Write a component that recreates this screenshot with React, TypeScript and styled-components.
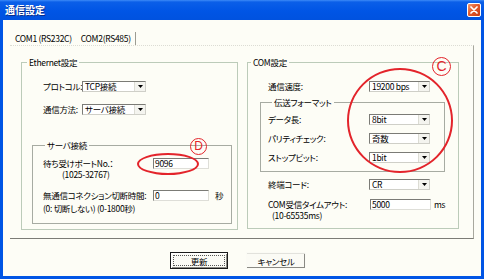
import React from 'react';
import styled, { createGlobalStyle } from 'styled-components';

const FONT = `"Noto Sans CJK JP", "Noto Sans", sans-serif`;

const GlobalStyle = createGlobalStyle`
  html, body {
    margin: 0;
    padding: 0;
    background: #ffffff;
  }
`;

const Window = styled.div`
  position: relative;
  width: 484px;
  height: 279px;
  box-sizing: border-box;
  display: flex;
  flex-direction: column;
  padding: 0 3px 3px 3px;
  background: #0055e5;
  font-family: ${FONT};
  font-size: 8.5px;
  letter-spacing: -0.3px;
  font-feature-settings: "palt" 1;
  color: #000;
  overflow: hidden;
`;

const TitleBar = styled.div`
  height: 20px;
  margin: 0 -3px;
  padding: 0 3px 0 5px;
  display: flex;
  align-items: center;
  justify-content: space-between;
  background: linear-gradient(to bottom, #3d8af7 0px, #0b5fe8 2px, #0055e5 55%, #0052df 100%);
`;

const Title = styled.span`
  color: #fff;
  font-weight: bold;
  font-size: 10px;
  letter-spacing: 0;
  line-height: 12px;
  text-shadow: 1px 1px 0 #0a2d8a;
`;

const CloseButton = styled.div`
  width: 14px;
  height: 14px;
  box-sizing: border-box;
  border: 1px solid #fff;
  border-radius: 2px;
  background: linear-gradient(135deg, #f39a70 0%, #e2592c 45%, #c83c12 100%);
  display: flex;
  align-items: center;
  justify-content: center;
`;

const Client = styled.div`
  flex: 1;
  display: flex;
  flex-direction: column;
  padding: 0 7px;
  background: #fdfdf6;
`;

const TabStrip = styled.div`
  height: 25px;
  display: flex;
  align-items: flex-end;
  padding-left: 1px;
`;

const Tab = styled.div<{ $active?: boolean }>`
  height: 13px;
  line-height: 13px;
  padding: 0 4px;
  white-space: nowrap;
  border-right: ${({ $active }) => ($active ? '1px solid #9c9c92' : '1px solid transparent')};
`;

const Pane = styled.div`
  height: 194px;
  box-sizing: border-box;
  border-top: 1px dotted #dcdcd4;
  border-right: 1px solid #a8a89e;
  border-bottom: 1px solid #7c7c76;
  padding: 10px 14px 8px 11px;
  display: grid;
  grid-template-columns: 217px 212px;
  column-gap: 9px;
  align-items: start;
`;

const GroupBox = styled.fieldset<{ $inner?: boolean; $h?: number }>`
  margin: 0;
  padding: 0;
  min-width: 0;
  box-sizing: border-box;
  height: ${({ $h }) => ($h ? `${$h}px` : 'auto')};
  border: 1px solid ${({ $inner }) => ($inner ? '#a7aba2' : '#bccbb9')};
`;

const Legend = styled.legend<{ $offset?: number }>`
  font-size: 8.5px;
  line-height: 12px;
  padding: 0 2px;
  margin-left: ${({ $offset }) => $offset ?? 3}px;
`;

const ServerBox = styled(GroupBox)`
  margin: 24px 5px 0 10px;
  padding: 6px 0 9px 10px;
`;

const FormatBox = styled(GroupBox)`
  width: 185px;
  margin: 4px 0 0 12px;
  padding: 5px 0 8px 7px;
  display: flex;
  flex-direction: column;
  gap: 7px;
`;

const Stack = styled.div<{ $gap: number; $top: number; $left: number }>`
  display: flex;
  flex-direction: column;
  gap: ${({ $gap }) => $gap}px;
  padding: ${({ $top }) => $top}px 0 0 ${({ $left }) => $left}px;
`;

const Row = styled.div`
  display: flex;
  align-items: center;
  height: 12px;
  white-space: nowrap;
`;

const Label = styled.span<{ $w: number }>`
  width: ${({ $w }) => $w}px;
  flex-shrink: 0;
  line-height: 11px;
`;

const SelectBox = styled.div<{ $w: number }>`
  width: ${({ $w }) => $w}px;
  height: 11px;
  box-sizing: border-box;
  display: flex;
  align-items: stretch;
  background: #fff;
  border: 1px solid;
  border-color: #7b7b76 #cfcfc8 #cfcfc8 #7b7b76;
`;

const SelectValue = styled.span`
  flex: 1;
  padding-left: 2px;
  line-height: 9px;
  white-space: nowrap;
`;

const SelectArrow = styled.span`
  width: 10px;
  display: flex;
  align-items: center;
  justify-content: center;
  background: #f4f4ef;
  border-left: 1px solid #dcdcd4;
`;

const TextField = styled.div<{ $w: number }>`
  width: ${({ $w }) => $w}px;
  height: 11px;
  box-sizing: border-box;
  padding-left: 1px;
  line-height: 9px;
  background: #fff;
  border: 1px solid;
  border-color: #7b7b76 #deded8 #deded8 #7b7b76;
`;

const Unit = styled.span<{ $gap: number }>`
  margin-left: ${({ $gap }) => $gap}px;
`;

const Note = styled.div<{ $indent?: number; $top?: number }>`
  display: flex;
  line-height: 11px;
  white-space: nowrap;
  padding-left: ${({ $indent }) => $indent ?? 0}px;
  margin-top: ${({ $top }) => $top ?? 0}px;
`;

const NotePart = styled.span<{ $w?: number }>`
  width: ${({ $w }) => ($w ? `${$w}px` : 'auto')};
`;

const Block = styled.div<{ $top: number; $left: number }>`
  margin-top: ${({ $top }) => $top}px;
  padding-left: ${({ $left }) => $left}px;
`;

const ButtonRow = styled.div`
  flex: 1;
  display: flex;
  justify-content: center;
  gap: 18px;
  padding: 13px 8px 0 0;
`;

const Button = styled.div<{ $w: number; $default?: boolean }>`
  position: relative;
  width: ${({ $w }) => $w}px;
  height: 17px;
  box-sizing: border-box;
  display: flex;
  align-items: center;
  justify-content: center;
  background: #fbfbf5;
  border: 1px solid ${({ $default }) => ($default ? '#1a1a1a' : 'transparent')};
  box-shadow: ${({ $default }) =>
    $default
      ? 'inset 1px 1px 0 #ffffff, inset -1px -1px 0 #8a8a84'
      : 'inset 0 1px 0 #e2e2dc, inset -1px -1px 0 #8a8a84'};

  &::after {
    content: '';
    display: ${({ $default }) => ($default ? 'block' : 'none')};
    position: absolute;
    inset: 2px;
    border: 1px dotted #555;
  }
`;

const Ellipse = styled.div<{ $x: number; $y: number; $w: number; $h: number }>`
  position: absolute;
  left: ${({ $x }) => $x}px;
  top: ${({ $y }) => $y}px;
  width: ${({ $w }) => $w}px;
  height: ${({ $h }) => $h}px;
  box-sizing: border-box;
  border: 2px solid #e3242b;
  border-radius: 50%;
  pointer-events: none;
`;

const Marker = styled.div<{ $x: number; $y: number; $size: number }>`
  position: absolute;
  left: ${({ $x }) => $x}px;
  top: ${({ $y }) => $y}px;
  width: ${({ $size }) => $size}px;
  height: ${({ $size }) => $size}px;
  box-sizing: border-box;
  border: 1.5px solid #e3242b;
  border-radius: 50%;
  color: #e3242b;
  font-family: "Liberation Sans", sans-serif;
  letter-spacing: 0;
  font-size: ${({ $size }) => $size - 5}px;
  line-height: ${({ $size }) => $size - 3}px;
  text-align: center;
`;

const DropArrow = () => (
  <svg width="5" height="3" viewBox="0 0 5 3">
    <path d="M0 0H5L2.5 3Z" fill="#000" />
  </svg>
);

const Select: React.FC<{ w: number; value: string }> = ({ w, value }) => (
  <SelectBox $w={w}>
    <SelectValue>{value}</SelectValue>
    <SelectArrow>
      <DropArrow />
    </SelectArrow>
  </SelectBox>
);

const App: React.FC = () => {
  return (
    <>
      <GlobalStyle />
      <Window>
        <TitleBar>
          <Title>通信設定</Title>
          <CloseButton>
            <svg width="8" height="8" viewBox="0 0 8 8">
              <path d="M1 1L7 7M7 1L1 7" stroke="#fff" strokeWidth="1.7" strokeLinecap="round" />
            </svg>
          </CloseButton>
        </TitleBar>

        <Client>
          <TabStrip>
            <Tab>COM1 (RS232C)</Tab>
            <Tab $active>COM2(RS485)</Tab>
          </TabStrip>

          <Pane>
            <GroupBox $h={174}>
              <Legend $offset={5}>Ethernet設定</Legend>
              <Stack $gap={11} $top={12} $left={21}>
                <Row>
                  <Label $w={39}>プロトコル:</Label>
                  <Select w={64} value="TCP接続" />
                </Row>
                <Row>
                  <Label $w={39}>通信方法:</Label>
                  <Select w={64} value="サーバ接続" />
                </Row>
              </Stack>

              <ServerBox $inner>
                <Legend $offset={2}>サーバ接続</Legend>
                <Row>
                  <Label $w={110}>待ち受けポートNo.：</Label>
                  <TextField $w={56}>9096</TextField>
                </Row>
                <Note $indent={19}>(1025-32767)</Note>
                <Block $top={9} $left={0}>
                  <Row>
                    <Label $w={110}>無通信コネクション切断時間:</Label>
                    <TextField $w={56}>0</TextField>
                    <Unit $gap={6}>秒</Unit>
                  </Row>
                  <Note $top={2}>
                    <NotePart $w={54}>(0: 切断しない)</NotePart>
                    <NotePart>(0-1800秒)</NotePart>
                  </Note>
                </Block>
              </ServerBox>
            </GroupBox>

            <GroupBox $h={173}>
              <Legend $offset={3}>COM設定</Legend>
              <Block $top={12} $left={20}>
                <Row>
                  <Label $w={101}>通信速度:</Label>
                  <Select w={61} value="19200 bps" />
                </Row>
              </Block>

              <FormatBox $inner>
                <Legend $offset={4}>伝送フォーマット</Legend>
                <Row>
                  <Label $w={101}>データ長:</Label>
                  <Select w={61} value="8bit" />
                </Row>
                <Row>
                  <Label $w={101}>パリティチェック:</Label>
                  <Select w={61} value="奇数" />
                </Row>
                <Row>
                  <Label $w={101}>ストップビット:</Label>
                  <Select w={61} value="1bit" />
                </Row>
              </FormatBox>

              <Block $top={6} $left={20}>
                <Row>
                  <Label $w={101}>終端コード:</Label>
                  <Select w={61} value="CR" />
                </Row>
              </Block>
              <Block $top={8} $left={20}>
                <Row>
                  <Label $w={102}>COM受信タイムアウト:</Label>
                  <TextField $w={61}>5000</TextField>
                  <Unit $gap={3}>ms</Unit>
                </Row>
                <Note $indent={4}>(10-65535ms)</Note>
              </Block>
            </GroupBox>
          </Pane>

          <ButtonRow>
            <Button $w={58} $default>更新</Button>
            <Button $w={60}>キャンセル</Button>
          </ButtonRow>
        </Client>

        <Ellipse $x={347} $y={68} $w={106} $h={105} />
        <Ellipse $x={137} $y={153} $w={62} $h={22} />
        <Marker $x={432} $y={57} $size={19}>C</Marker>
        <Marker $x={190} $y={138} $size={17}>D</Marker>
      </Window>
    </>
  );
};

export default App;
